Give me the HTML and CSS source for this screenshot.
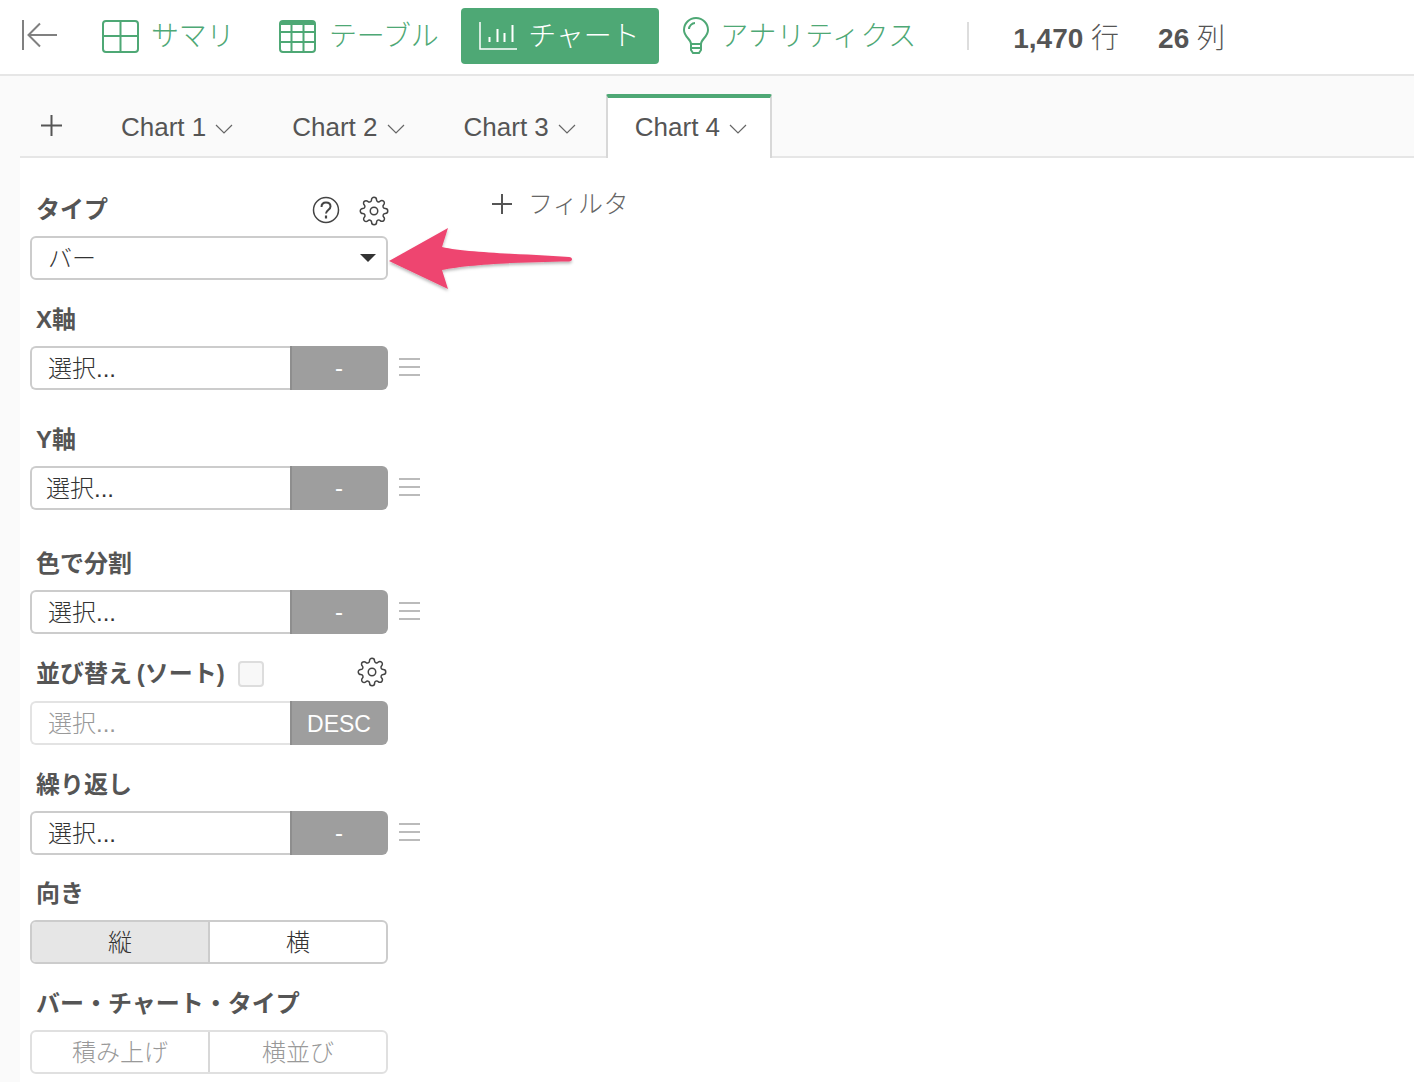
FILE: index.html
```html
<!DOCTYPE html>
<html lang="ja">
<head>
<meta charset="utf-8">
<title>Chart</title>
<link rel="stylesheet" href="styles.css">
</head>
<body>
<header class="topbar">
  <svg class="collapse" width="38" height="30" viewBox="0 0 38 30" fill="none" stroke="#808080"><path d="M3 0v30" stroke-width="2"/><path d="M37 15H9M20 3.500 8.500 15 20 26.500" stroke-width="2"/></svg>
  <a class="nav nav-sum"><svg width="38" height="34" viewBox="0 0 38 34" fill="none" stroke="#4ea875" stroke-width="2"><rect x="2" y="2" width="35" height="31" rx="3"/><path d="M19.500 2v31M2 17h35"/></svg><span>サマリ</span></a>
  <a class="nav nav-tab"><svg width="38" height="34" viewBox="0 0 38 34" fill="none" stroke="#4ea875" stroke-width="2"><rect x="2" y="2" width="35" height="31" rx="3"/><path d="M2 4h35" stroke-width="4"/><path d="M13.500 2v31M25.500 2v31M2 13h35M2 23h35"/></svg><span>テーブル</span></a>
  <a class="nav nav-active"><svg width="38" height="30" viewBox="0 0 38 30" fill="none" stroke="#fff" stroke-width="1.500"><path d="M1 1v27h37"/><path d="M10.500 21v-5M18.500 21V8M25.500 21v-9M33.500 21V4" stroke-width="2"/></svg><span>チャート</span></a>
  <a class="nav nav-ana"><svg width="28" height="38" viewBox="0 0 28 38" fill="none" stroke="#4ea875" stroke-width="2"><path d="M9 27c0-5-7-7-7-14a12 12 0 0 1 24 0c0 7-7 9-7 14z"/><path d="M7 12c0-3 3-6 6-6"/><path d="M9 27v6l2 3h6l2-3v-6M9 31h10"/></svg><span>アナリティクス</span></a>
  <i class="vsep"></i>
  <span class="count"><b>1,470</b> 行</span>
  <span class="count"><b>26</b> 列</span>
</header>

<nav class="tabs">
  <svg class="plus" width="21" height="21" viewBox="0 0 21 21" stroke="#555" stroke-width="2"><path d="M10.500 0v21M0 10.500h21"/></svg>
  <a class="tab">Chart 1<svg class="chev" width="18" height="10" viewBox="0 0 18 10" fill="none" stroke="#666" stroke-width="1.200"><path d="M1 1l8 8 8-8"/></svg></a>
  <a class="tab">Chart 2<svg class="chev" width="18" height="10" viewBox="0 0 18 10" fill="none" stroke="#666" stroke-width="1.200"><path d="M1 1l8 8 8-8"/></svg></a>
  <a class="tab">Chart 3<svg class="chev" width="18" height="10" viewBox="0 0 18 10" fill="none" stroke="#666" stroke-width="1.200"><path d="M1 1l8 8 8-8"/></svg></a>
  <a class="tab tab-active">Chart 4<svg class="chev" width="18" height="10" viewBox="0 0 18 10" fill="none" stroke="#666" stroke-width="1.200"><path d="M1 1l8 8 8-8"/></svg></a>
</nav>

<main class="content">
  <aside class="side">
    <section class="sec sec-type">
      <div class="lab">タイプ
        <svg class="help" width="28" height="28" viewBox="0 0 28 28" fill="none" stroke="#444" stroke-width="1.500"><circle cx="14" cy="14" r="12.500"/><path d="M9.500 11c0-3 2-4.500 4.500-4.500s4.500 1.500 4.500 4c0 3.500-4.500 3.500-4.500 7" stroke-width="2"/><path d="M14 19.500v3" stroke-width="2.200"/></svg>
        <svg class="gear gear-a" width="30" height="30" viewBox="0 0 24 24" fill="none" stroke="#444" stroke-width="1.200" stroke-linejoin="round"><circle cx="12" cy="12" r="3"/><path d="M19.400 15a1.650 1.650 0 0 0 .33 1.820l.06.06a2 2 0 0 1 0 2.830 2 2 0 0 1-2.830 0l-.06-.06a1.650 1.650 0 0 0-1.820-.33 1.650 1.650 0 0 0-1 1.510V21a2 2 0 0 1-2 2 2 2 0 0 1-2-2v-.09A1.650 1.650 0 0 0 9 19.400a1.650 1.650 0 0 0-1.820.33l-.06.06a2 2 0 0 1-2.830 0 2 2 0 0 1 0-2.830l.06-.06a1.650 1.650 0 0 0 .33-1.820 1.650 1.650 0 0 0-1.510-1H3a2 2 0 0 1-2-2 2 2 0 0 1 2-2h.09A1.650 1.650 0 0 0 4.600 9a1.650 1.650 0 0 0-.33-1.820l-.06-.06a2 2 0 0 1 0-2.830 2 2 0 0 1 2.830 0l.06.06a1.650 1.650 0 0 0 1.820.33H9a1.650 1.650 0 0 0 1-1.510V3a2 2 0 0 1 2-2 2 2 0 0 1 2 2v.09a1.650 1.650 0 0 0 1 1.510 1.650 1.650 0 0 0 1.820-.33l.06-.06a2 2 0 0 1 2.830 0 2 2 0 0 1 0 2.830l-.06.06a1.650 1.650 0 0 0-.33 1.820V9a1.650 1.650 0 0 0 1.510 1H21a2 2 0 0 1 2 2 2 2 0 0 1-2 2h-.09a1.650 1.650 0 0 0-1.510 1z"/></svg>
      </div>
      <div class="select"><span>バー</span><i class="caret"></i></div>
    </section>

    <section class="sec">
      <div class="lab">X軸</div>
      <div class="row"><div class="field"><div class="input">選択...</div><div class="addon">-</div></div><i class="menu"></i></div>
    </section>

    <section class="sec sec-y">
      <div class="lab">Y軸</div>
      <div class="row"><div class="field"><div class="input input-y">選択...</div><div class="addon">-</div></div><i class="menu"></i></div>
    </section>

    <section class="sec sec-color">
      <div class="lab">色で分割</div>
      <div class="row"><div class="field"><div class="input">選択...</div><div class="addon">-</div></div><i class="menu"></i></div>
    </section>

    <section class="sec sec-sort">
      <div class="lab lab-sort">並び替え (ソート)<i class="check"></i>
        <svg class="gear gear-b" width="30" height="30" viewBox="0 0 24 24" fill="none" stroke="#444" stroke-width="1.200" stroke-linejoin="round"><circle cx="12" cy="12" r="3"/><path d="M19.400 15a1.650 1.650 0 0 0 .33 1.820l.06.06a2 2 0 0 1 0 2.830 2 2 0 0 1-2.830 0l-.06-.06a1.650 1.650 0 0 0-1.820-.33 1.650 1.650 0 0 0-1 1.510V21a2 2 0 0 1-2 2 2 2 0 0 1-2-2v-.09A1.650 1.650 0 0 0 9 19.400a1.650 1.650 0 0 0-1.820.33l-.06.06a2 2 0 0 1-2.830 0 2 2 0 0 1 0-2.830l.06-.06a1.650 1.650 0 0 0 .33-1.820 1.650 1.650 0 0 0-1.510-1H3a2 2 0 0 1-2-2 2 2 0 0 1 2-2h.09A1.650 1.650 0 0 0 4.600 9a1.650 1.650 0 0 0-.33-1.820l-.06-.06a2 2 0 0 1 0-2.830 2 2 0 0 1 2.830 0l.06.06a1.650 1.650 0 0 0 1.820.33H9a1.650 1.650 0 0 0 1-1.510V3a2 2 0 0 1 2-2 2 2 0 0 1 2 2v.09a1.650 1.650 0 0 0 1 1.510 1.650 1.650 0 0 0 1.820-.33l.06-.06a2 2 0 0 1 2.830 0 2 2 0 0 1 0 2.830l-.06.06a1.650 1.650 0 0 0-.33 1.820V9a1.650 1.650 0 0 0 1.510 1H21a2 2 0 0 1 2 2 2 2 0 0 1-2 2h-.09a1.650 1.650 0 0 0-1.510 1z"/></svg>
      </div>
      <div class="row"><div class="field field-off"><div class="input">選択...</div><div class="addon addon-text">DESC</div></div></div>
    </section>

    <section class="sec">
      <div class="lab">繰り返し</div>
      <div class="row"><div class="field"><div class="input">選択...</div><div class="addon">-</div></div><i class="menu"></i></div>
    </section>

    <section class="sec sec-dir">
      <div class="lab">向き</div>
      <div class="seg"><div class="seg-item seg-on">縦</div><div class="seg-item">横</div></div>
    </section>

    <section class="sec">
      <div class="lab">バー・チャート・タイプ</div>
      <div class="seg seg-off"><div class="seg-item">積み上げ</div><div class="seg-item">横並び</div></div>
    </section>
  </aside>

  <div class="filter">
    <svg width="20" height="20" viewBox="0 0 20 20" stroke="#555" stroke-width="2"><path d="M10 0v20M0 10h20"/></svg>
    <span>フィルタ</span>
  </div>

  <svg class="arrow" width="200" height="80" viewBox="0 0 200 80"><defs><filter id="sh" x="-10%" y="-10%" width="120%" height="130%"><feDropShadow dx="0" dy="2" stdDeviation="1.500" flood-color="#000" flood-opacity=".28"/></filter></defs><path d="M13 35 72 2 66 21C92 27 151 28 193 31c4 .5 4 4 0 4.500C151 36 92 38 66 44l6 19z" fill="#ee4570" filter="url(#sh)"/></svg>
</main>
</body>
</html>
```
FILE: styles.css
```css
* { box-sizing: border-box; }
html, body { margin: 0; padding: 0; }
body {
  width: 1414px; height: 1082px; overflow: hidden; background: #fafafa;
  font-family: "Liberation Sans", "Noto Sans CJK JP", sans-serif;
  font-size: 24px; color: #555; position: relative;
}
.topbar {
  height: 76px; background: #fff; border-bottom: 2px solid #e6e6e6;
  display: flex; align-items: center; padding: 0 0 2px 20px;
}
.topbar > * { flex: none; }
.collapse { margin: 0 43px 2px 0; }
.nav {
  display: flex; align-items: center; height: 56px; color: #4ea875;
  font-family: "Noto Sans CJK JP", sans-serif; font-weight: 300; font-size: 28px; letter-spacing: -0.2px;
}
.nav span { margin-bottom: 4px; }
.nav-sum { gap: 12px; margin-right: 43.6px; }
.nav-tab { gap: 13px; margin-right: 22.8px; }
.nav-active { background: #4ea875; color: #fff; border-radius: 4px; width: 198px; padding-left: 18px; gap: 11px; margin-right: 23px; }
.nav-ana { gap: 10px; margin-right: 50.500px; letter-spacing: 0.5px; }
.vsep { width: 2px; height: 28px; background: #ddd; margin-right: 44px; }
.count { margin-right: 39px; font-size: 28px; color: #555; font-weight: 300; }
.count b { font-weight: 700; }
.tabs {
  height: 82px; margin-left: 20px; border-bottom: 2px solid #e6e6e6;
  display: flex; align-items: flex-end; position: relative;
}
.plus { margin: 0 0 20px 21px; }
.tab {
  height: 62px; display: flex; align-items: center; gap: 9px; font-size: 26px; color: #555;
  padding: 4px 0 0; margin-left: 59px;
}
.tab-active {
  width: 166px; margin-left: 30px; padding: 0 0 2px 27px; height: 64px; margin-bottom: -2px;
  background: #fff; border: 2px solid #d8d8d8; border-top: 4px solid #4ea875; border-bottom: 0; border-radius: 2px 2px 0 0;
}
.chev { margin-top: 4px; }
.content { margin-left: 20px; height: 924px; background: #fff; display: flex; position: relative; }
.side { width: 410px; padding-left: 10px; flex: none; }
.lab {
  height: 40px; line-height: 40px; margin-bottom: 7px; padding: 2px 0 0 6px; font-weight: 700;
  color: #555; font-size: 24px;
  position: relative; display: flex; align-items: center; white-space: nowrap;
}
.lab-sort { padding-top: 0; word-spacing: -2px; }
.sec { margin-top: 19px; width: 392px; }
.sec-type { margin-top: 31px; }
.sec-y { margin-top: 29px; }
.sec-color { margin-top: 33px; }
.sec-sort { margin-top: 20px; }
.sec-dir { margin-top: 18px; }
.help { position: absolute; left: 282px; top: 7px; }
.gear { position: absolute; }
.gear-a { left: 329px; top: 7px; }
.gear-b { left: 327px; top: 3px; }
.check { width: 26px; height: 26px; margin-left: 13px; border: 2px solid #ddd; border-radius: 4px; background: #f8f8f8; }
.select {
  width: 358px; height: 44px; border: 2px solid #ccc; border-radius: 6px; background: #fff;
  display: flex; align-items: center; justify-content: space-between; padding: 0 10px 0 16px;
  font-family: "Noto Sans CJK JP", sans-serif; font-weight: 300; color: #333;
}
.select span { margin-bottom: 4px; }
.caret { width: 0; height: 0; border: 8px solid transparent; border-top: 8px solid #333; border-bottom: 0; }
.row { display: flex; align-items: center; gap: 11px; }
.field { width: 358px; height: 44px; display: flex; }
.input {
  width: 260px; flex: none; border: 2px solid #ccc; border-right: 0; border-radius: 6px 0 0 6px; background: #fff;
  padding-left: 16px; line-height: 42px; color: #333; font-weight: 300;
}
.input-y { padding-left: 14px; }
.addon {
  flex: 1; background: #9e9e9e; border-left: 2px solid #8e8e8e; border-radius: 0 6px 6px 0; color: #fff;
  text-align: center; line-height: 44px; font-size: 24px; padding-right: 2px;
}
.addon-text { line-height: 46px; font-size: 23px; }
.field-off .input { border-color: #e3e3e3; color: #999; }
.menu { width: 21px; height: 18px; margin-bottom: 2px; border-top: 2px solid #bbb; border-bottom: 2px solid #bbb; position: relative; }
.menu::after { content: ""; position: absolute; left: 0; right: 0; top: 6px; height: 2px; background: #bbb; }
.seg {
  width: 358px; height: 44px; display: flex; border: 2px solid #ccc; border-radius: 6px; overflow: hidden; background: #fff;
  font-family: "Noto Sans CJK JP", sans-serif; font-weight: 300; color: #333;
}
.seg-item { width: 176px; flex: none; text-align: center; line-height: 38px; }
.seg-item + .seg-item { width: 178px; border-left: 2px solid #ccc; }
.seg-on { background: #e6e6e6; }
.seg-off { border-color: #e0e0e0; color: #999; }
.seg-off .seg-item + .seg-item { border-left-color: #d8d8d8; }
.filter {
  display: flex; align-items: center; gap: 16px; height: 40px; margin: 26px 0 0 62px;
  font-family: "Noto Sans CJK JP", sans-serif; font-weight: 300; font-size: 25px; color: #666; letter-spacing: 0.3px;
}
.filter span { margin-bottom: 4px; }
.arrow { position: absolute; left: 356px; top: 68px; }
```
